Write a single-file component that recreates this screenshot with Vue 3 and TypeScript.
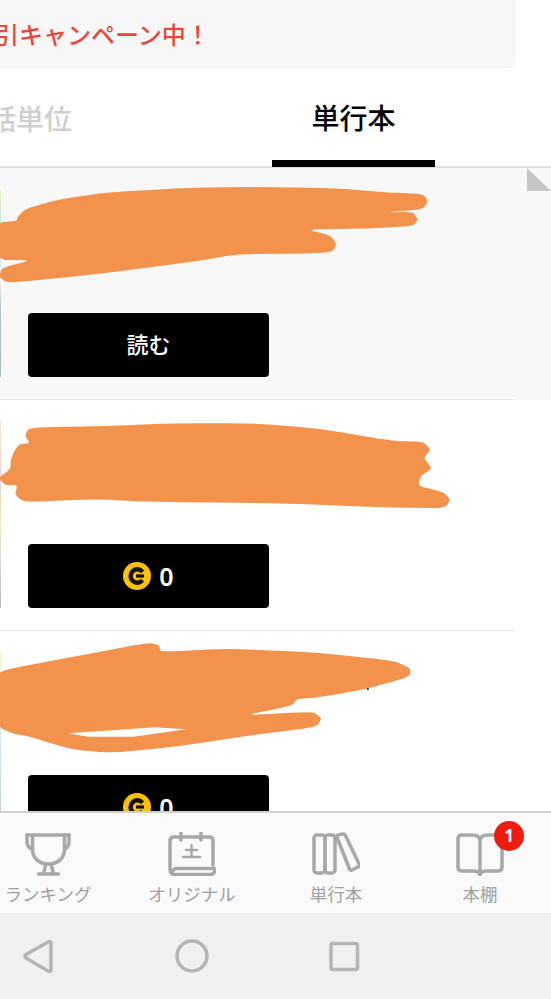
<script setup lang="ts">
type Point = [number, number]

interface Book {
  action: string
  coin: boolean
  strip: string
}

const books: Book[] = [
  { action: '読む', coin: false, strip: 'linear-gradient(#e6efb8, #b8e6ea 28%, #f6ece6 50%, #b6c4cd 62%, #a9bac4)' },
  { action: '0', coin: true, strip: 'linear-gradient(#f3ead2, #efccd8 30%, #f3e6b4 55%, #d5dadd 75%, #b4b4b4)' },
  { action: '0', coin: true, strip: 'linear-gradient(#f6f2c0, #dcebf0 40%, #ccdbe6 70%, #b8b8b8)' },
]

function smooth(pts: Point[]): string {
  const n = pts.length
  const at = (a: Point, b: Point, t: number) => `${a[0] + (b[0] - a[0]) * t} ${a[1] + (b[1] - a[1]) * t}`
  let d = `M${at(pts[n - 1], pts[0], 0.7)}`
  for (let i = 0; i < n; i++) {
    const next = pts[(i + 1) % n]
    d += `Q${pts[i][0]} ${pts[i][1]} ${at(pts[i], next, 0.3)}L${at(pts[i], next, 0.7)}`
  }
  return d + 'Z'
}

const scribbleA = smooth([
  [48, 112], [75, 85], [170, 58], [300, 38], [500, 25], [700, 20], [960, 25], [1100, 37], [1205, 42], [1218, 65], [1203, 88], [1095, 97],
  [1175, 96], [1190, 118], [1176, 138], [1050, 146], [870, 148], [940, 166], [958, 192], [946, 217], [850, 221], [680, 222], [560, 243],
  [300, 280], [20, 310], [-2, 290], [5, 264], [90, 240], [-8, 240], [-8, 128], [50, 122],
])

const scribbleB = smooth([
  [70, 765], [85, 742], [300, 738], [500, 730], [720, 730], [900, 745], [1120, 783], [1205, 785], [1226, 810], [1205, 834], [1230, 865],
  [1197, 888], [1190, 918], [1262, 936], [1282, 960], [1265, 985], [1100, 983], [800, 970], [400, 965], [270, 957], [70, 967], [42, 945],
  [50, 915], [15, 916], [-4, 893], [30, 868], [30, 840], [40, 815], [55, 792], [85, 790],
])

const scribbleC = smooth([
  [-6, 130], [20, 118], [420, 38], [453, 45], [456, 66], [650, 55], [900, 68], [1120, 92], [1168, 115], [1166, 140], [1040, 178], [900, 203],
  [845, 207], [830, 227], [690, 257], [890, 244], [916, 265], [900, 291], [700, 318], [500, 350], [320, 369], [200, 358], [80, 318], [40, 312],
  [-6, 292],
])
const slit = 'M195 310L440 292L530 298L380 320L250 320Z'
</script>

<template>
  <div class="page">
    <header class="banner">
      <span class="banner-text">引キャンペーン中！</span>
    </header>

    <nav class="tabs">
      <div class="tab tab-off"><span>話単位</span></div>
      <div class="tab tab-on"><span>単行本</span></div>
    </nav>

    <main class="list">
      <article v-for="(book, i) in books" :key="i" class="row" :class="{ 'row-read': i === 0 }">
        <div class="row-inner">
          <div class="thumb" :style="{ background: book.strip }"></div>
          <div class="row-body">
            <button class="action" type="button">
              <svg v-if="book.coin" class="coin" viewBox="0 0 28 28" aria-hidden="true">
                <circle cx="14" cy="14" r="14" fill="#fcc102" />
                <path d="M19.500 9.800A6.700 6.700 0 1 0 19.500 18.200" fill="none" stroke="#111" stroke-width="4.400" />
                <path d="M13 14H21" stroke="#111" stroke-width="3.200" />
              </svg>
              <span :class="book.coin ? 'price' : 'read'">{{ book.action }}</span>
            </button>
          </div>
        </div>
        <span v-if="i === 0" class="fold"></span>
      </article>
    </main>

    <footer class="bottom-nav">
      <div class="nav-item">
        <svg class="nav-icon" viewBox="0 0 48 44" aria-hidden="true">
          <path d="M3 3H45" />
          <path d="M8.500 3V17C8.500 26 15 32 24.500 32C34 32 40.500 26 40.500 17V3" />
          <path d="M3 3V10C3 14 5 16 8.500 17M45 3V10C45 14 43 16 40.500 17" />
          <path d="M22 32L19.500 41.500M27 32L29.500 41.500M14.500 42H34.500" />
        </svg>
        <span>ランキング</span>
      </div>
      <div class="nav-item">
        <svg class="nav-icon" viewBox="0 0 48 44" aria-hidden="true">
          <path d="M45 33V9C45 6.500 43.500 5 41 5H6C3.500 5 2 6.500 2 9V37C2 41 4 42.500 7 42.500H42C46 42.500 47 40 47 36.500H9C6 36.500 5 38 4 40" />
          <path d="M13 1V8M33 1V8" />
          <path d="M23.500 13V24M18 18H29M15 25H32" stroke-width="2.400" />
        </svg>
        <span>オリジナル</span>
      </div>
      <div class="nav-item">
        <svg class="nav-icon" viewBox="0 0 48 44" aria-hidden="true">
          <rect x="2" y="3" width="11" height="38" rx="3" />
          <rect x="13" y="3" width="10" height="38" rx="3" />
          <path d="M25 5.500C24.500 4.500 25 3.500 26 3L31 2C32 1.800 33 2.500 33.500 3.500L47 32C47.500 33.500 47 34.500 46 35L40 38C39 38.500 38 38 37.500 37Z" />
        </svg>
        <span>単行本</span>
      </div>
      <div class="nav-item">
        <svg class="nav-icon" viewBox="0 0 48 44" aria-hidden="true">
          <path d="M24 8C23 4.500 20 3 17 3H6C3.500 3 2 4.500 2 7V35C2 37.500 3.500 39 6 39H18C21 39 23 40 24 42.500C25 40 27 39 30 39H42C44.500 39 46 37.500 46 35V7C46 4.500 44.500 3 42 3H31C28 3 25 4.500 24 8V42" />
        </svg>
        <span>本棚</span>
        <b class="badge">1</b>
      </div>
    </footer>

    <div class="system-bar">
      <svg class="sys-icon" viewBox="0 0 551 86" aria-hidden="true">
        <path d="M51 30V56.500C51 58.500 50 59 48 58L26 45C24.500 44 24.500 42.500 26 41.500L48 29C50 28 51 28.500 51 30Z" />
        <circle cx="192" cy="43" r="15" />
        <rect x="331" y="30.500" width="26.500" height="26" rx="2" />
      </svg>
    </div>

    <svg class="scribbles" viewBox="0 0 551 999" aria-hidden="true">
      <g transform="translate(0 180) scale(.3514 .3333)">
        <path :d="scribbleA" />
        <path :d="scribbleB" />
        <path d="M90 238L116 236L90 241Z" class="green" />
      </g>
      <g transform="translate(0 630) scale(.3514 .3333)">
        <path :d="scribbleC + slit" fill-rule="evenodd" />
        <circle cx="1047" cy="177" r="3" class="dot" />
      </g>
    </svg>
  </div>
</template>

<style scoped>
.page {
  position: relative;
  display: flex;
  flex-direction: column;
  width: 551px;
  height: 999px;
  overflow: hidden;
  background: #fff;
  font-family: "Noto Sans CJK JP", "Noto Sans", sans-serif;
}

.banner {
  display: flex;
  align-items: center;
  flex: none;
  width: 515px;
  height: 68px;
  box-sizing: border-box;
  padding-top: 1px;
  border: 1px solid #f1f1f1;
  border-top: 0;
  border-left: 0;
  border-radius: 0 0 5px 0;
  background: #f7f7f7;
}

.banner-text {
  margin-left: -5px;
  color: #e8483a;
  font-size: 24px;
  font-weight: 500;
  line-height: 1;
  white-space: nowrap;
}

.tabs {
  display: flex;
  flex: none;
  height: 100px;
  box-sizing: border-box;
  border-bottom: 2px solid #e0e0e0;
  overflow: visible;
}

.tab {
  display: flex;
  align-items: center;
  justify-content: center;
  box-sizing: border-box;
  height: 100px;
  padding-bottom: 1px;
  font-size: 28px;
  font-weight: 500;
  line-height: 1;
  white-space: nowrap;
}

.tab-off {
  width: 272px;
  justify-content: flex-start;
  color: #cfcfcf;
}

.tab-off span {
  margin-left: -12px;
}

.tab-on {
  width: 163px;
  height: 99px;
  border-bottom: 7px solid #000;
  padding-top: 6px;
  color: #000;
}

.list {
  flex: 1;
  min-height: 0;
  overflow: hidden;
}

.row {
  position: relative;
}

.row-read {
  background: #f8f8f8;
}

.row-inner {
  display: flex;
  width: 515px;
  padding: 21px 0 22px;
  border-bottom: 1px solid #e8e8e8;
}

.row-read .row-inner {
  padding-top: 22px;
}

.thumb {
  flex: none;
  width: 1px;
  height: 187px;
}

.row-body {
  display: flex;
  flex: 1;
  align-items: flex-end;
  padding-left: 27px;
}

.action {
  display: flex;
  align-items: center;
  justify-content: center;
  gap: 8px;
  width: 241px;
  height: 64px;
  padding: 0;
  border: 0;
  border-radius: 4px;
  background: #000;
  color: #fff;
  font-family: inherit;
}

.read {
  padding-bottom: 4px;
  font-size: 22px;
  font-weight: 500;
  line-height: 1;
}

.price {
  font-family: "Noto Sans", sans-serif;
  font-size: 25px;
  font-weight: 600;
  line-height: 1;
}

.coin {
  flex: none;
  width: 28px;
  height: 28px;
}

.fold {
  position: absolute;
  top: 0;
  right: 0;
  width: 24px;
  height: 23px;
  background: #c4c4c4;
  clip-path: polygon(0 0, 100% 100%, 0 100%);
}

.bottom-nav {
  position: relative;
  z-index: 1;
  display: grid;
  flex: none;
  grid-template-columns: repeat(4, 144px);
  width: 576px;
  height: 102px;
  box-sizing: border-box;
  margin-left: -24px;
  padding-top: 19px;
  border-top: 2px solid #cfcfcf;
  background: #fafafa;
}

.nav-item {
  position: relative;
  display: flex;
  flex-direction: column;
  align-items: center;
  color: #a0a0a0;
  font-size: 17.500px;
  line-height: 22px;
  white-space: nowrap;
}

.nav-icon {
  width: 48px;
  height: 44px;
  margin-bottom: 7px;
  fill: none;
  stroke: #a8a8a8;
  stroke-width: 3.500;
  stroke-linecap: round;
  stroke-linejoin: round;
}

.badge {
  position: absolute;
  top: -11px;
  left: 86px;
  width: 30px;
  height: 30px;
  border-radius: 50%;
  background: #ee1c0f;
  color: #fff;
  font-family: "Noto Sans", sans-serif;
  font-size: 17px;
  font-weight: 700;
  line-height: 30px;
  text-align: center;
}

.system-bar {
  flex: none;
  height: 86px;
  background: #f0f0f0;
}

.sys-icon {
  display: block;
  width: 551px;
  height: 86px;
  fill: none;
  stroke: #b5b5b5;
  stroke-width: 3.500;
  stroke-linejoin: round;
  stroke-linecap: round;
}

.scribbles {
  position: absolute;
  top: 0;
  left: 0;
  z-index: 0;
  width: 551px;
  height: 999px;
  pointer-events: none;
  overflow: hidden;
}

.scribbles path {
  fill: #f2924c;
}

.scribbles .green {
  fill: #7cc35a;
}

.scribbles .dot {
  fill: #222;
}
</style>
